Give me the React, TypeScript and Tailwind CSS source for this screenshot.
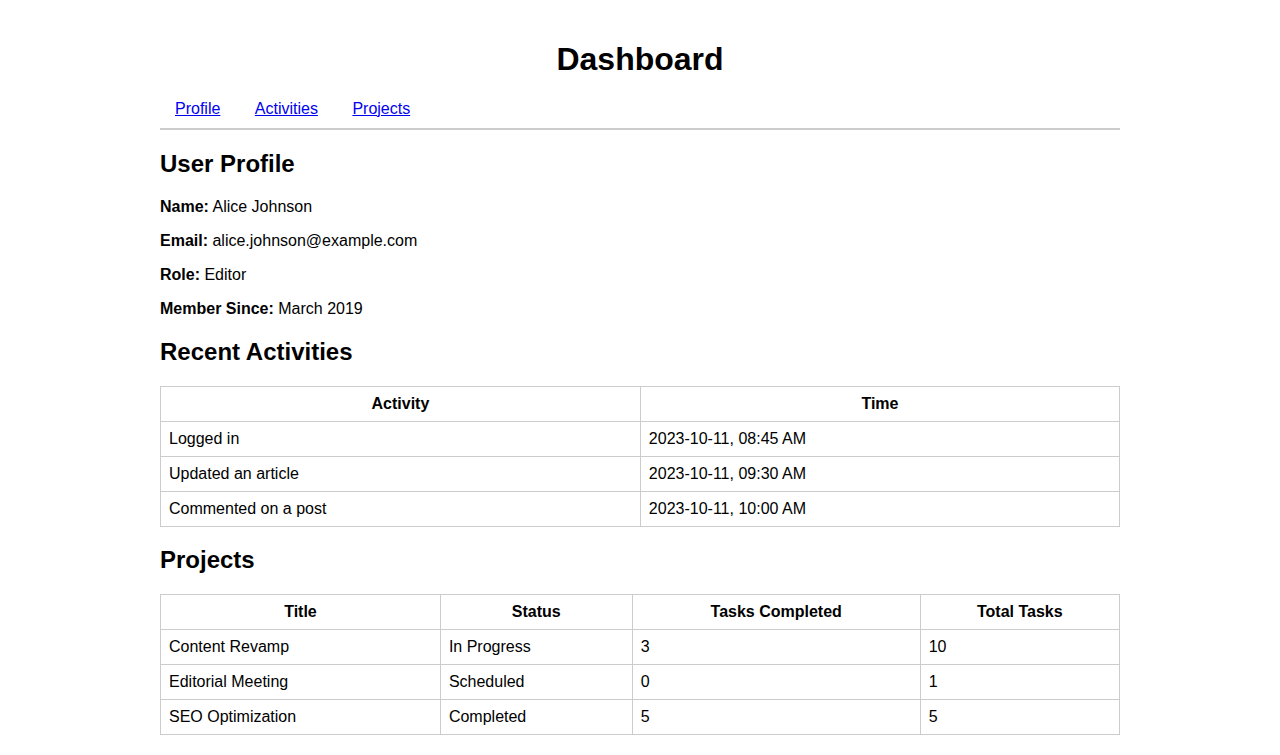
import React from "react";

const activities = [
  ["Logged in", "2023-10-11, 08:45 AM"],
  ["Updated an article", "2023-10-11, 09:30 AM"],
  ["Commented on a post", "2023-10-11, 10:00 AM"],
];

const projects = [
  ["Content Revamp", "In Progress", "3", "10"],
  ["Editorial Meeting", "Scheduled", "0", "1"],
  ["SEO Optimization", "Completed", "5", "5"],
];

const th = "border border-[#ccc] p-2 text-center font-bold";
const td = "border border-[#ccc] p-2 text-left";

export default function App() {
  return (
    <div
      className="bg-white text-black p-5 leading-[normal] text-[16px]"
      style={{ fontFamily: '"Liberation Sans", Arial, sans-serif' }}
    >
      <div className="max-w-[960px] mx-auto">
        <h1 className="text-[32px] font-bold text-center my-[21.44px]">Dashboard</h1>
        <nav className="pb-[10px] border-b-2 border-[#ccc]">
          <a href="#profile" className="px-[15px] text-[#0000ee] underline">Profile</a>{" "}
          <a href="#activities" className="px-[15px] text-[#0000ee] underline">Activities</a>{" "}
          <a href="#projects" className="px-[15px] text-[#0000ee] underline">Projects</a>
        </nav>
        <section id="profile">
          <h2 className="text-[24px] font-bold my-[19.92px]">User Profile</h2>
          <p className="my-4"><strong className="font-bold">Name:</strong> Alice Johnson</p>
          <p className="my-4"><strong className="font-bold">Email:</strong> alice.johnson@example.com</p>
          <p className="my-4"><strong className="font-bold">Role:</strong> Editor</p>
          <p className="my-4"><strong className="font-bold">Member Since:</strong> March 2019</p>
        </section>
        <section id="activities">
          <h2 className="text-[24px] font-bold my-[19.92px]">Recent Activities</h2>
          <table className="w-full border-collapse">
            <thead>
              <tr>
                <th className={th}>Activity</th>
                <th className={th}>Time</th>
              </tr>
            </thead>
            <tbody>
              {activities.map((r) => (
                <tr key={r[0]}>
                  <td className={td}>{r[0]}</td>
                  <td className={td}>{r[1]}</td>
                </tr>
              ))}
            </tbody>
          </table>
        </section>
        <section id="projects">
          <h2 className="text-[24px] font-bold my-[19.92px]">Projects</h2>
          <table className="w-full border-collapse">
            <thead>
              <tr>
                <th className={th}>Title</th>
                <th className={th}>Status</th>
                <th className={th}>Tasks Completed</th>
                <th className={th}>Total Tasks</th>
              </tr>
            </thead>
            <tbody>
              {projects.map((r) => (
                <tr key={r[0]}>
                  {r.map((c, i) => (
                    <td key={i} className={td}>{c}</td>
                  ))}
                </tr>
              ))}
            </tbody>
          </table>
        </section>
      </div>
    </div>
  );
}
